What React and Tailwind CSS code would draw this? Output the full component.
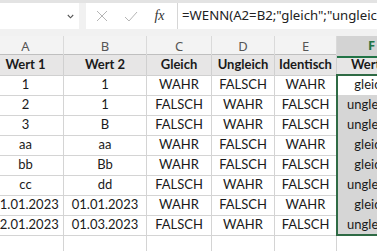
import React from "react";

const rows = [
  ["1", "1", "WAHR", "FALSCH", "WAHR", "gleich"],
  ["2", "1", "FALSCH", "WAHR", "FALSCH", "ungleich"],
  ["3", "B", "FALSCH", "WAHR", "FALSCH", "ungleich"],
  ["aa", "aa", "WAHR", "FALSCH", "WAHR", "gleich"],
  ["bb", "Bb", "WAHR", "FALSCH", "FALSCH", "gleich"],
  ["cc", "dd", "FALSCH", "WAHR", "FALSCH", "ungleich"],
  ["01.01.2023", "01.01.2023", "WAHR", "FALSCH", "WAHR", "gleich"],
  ["02.01.2023", "01.03.2023", "FALSCH", "WAHR", "FALSCH", "ungleich"],
];

const headers = ["Wert 1", "Wert 2", "Gleich", "Ungleich", "Identisch", "Wert 3"];
const letters = ["A", "B", "C", "D", "E"];

export default function App() {
  return (
    <div className="relative w-[377px] h-[251px] overflow-hidden bg-white">
      {/* formula bar */}
      <div className="h-[36px] bg-[#f1f1f1] border-t-[3px] border-[#e3e3e3] pb-[7px] flex">
        <div className="w-[79px] h-[26px] bg-white flex items-center justify-end pr-[5px]">
          <svg width="7" height="5" viewBox="0 0 7 5">
            <path d="M0.8 1 L3.5 3.8 L6.2 1" fill="none" stroke="#555" strokeWidth="1.1" />
          </svg>
        </div>
        <div className="w-[7px]" />
        <div className="w-[91px] h-[26px] bg-white flex items-center">
          <div className="w-[30px] flex justify-center ml-[1px]">
            <svg width="12" height="12" viewBox="0 0 12 12">
              <path d="M1 1 L11 11 M11 1 L1 11" stroke="#b5b5b5" strokeWidth="1" fill="none" />
            </svg>
          </div>
          <div className="w-[27px] flex justify-center">
            <svg width="14" height="11" viewBox="0 0 14 11">
              <path d="M1 6 L5 10 L13 1" stroke="#b5b5b5" strokeWidth="1" fill="none" />
            </svg>
          </div>
          <div
            className="flex-1 text-center italic text-[14px] text-[#333] leading-none pr-[2px]"
            style={{ fontFamily: '"Liberation Serif", serif' }}
          >
            fx
          </div>
        </div>
        <div
          className="flex-1 h-[26px] bg-white border-l border-[#d6d6d6] flex items-center pl-[4px] whitespace-nowrap overflow-hidden text-[13.2px] text-[#222]"
          style={{ fontFamily: '"Noto Sans", sans-serif' }}
        >
          =WENN(A2=B2;"gleich";"ungleich")
        </div>
      </div>

      {/* grid */}
      <div className="ml-[-12px]">
        <div
          className="grid grid-cols-[76px_83px_65px_63px_62px_69px] h-[19px] bg-[#f3f3f3] border-b border-[#bfbfbf] text-[13px] text-[#555]"
          style={{ fontFamily: '"Noto Sans", sans-serif' }}
        >
          {letters.map((l) => (
            <div key={l} className="flex items-center justify-center border-r border-[#dadada]">
              {l}
            </div>
          ))}
          <div className="flex items-center justify-center bg-[#d3d3d3] border-b-2 border-[#217346] font-bold text-[#217346] mb-[-1px]">
            F
          </div>
        </div>

        <div style={{ fontFamily: "Lato, sans-serif" }} className="text-[13px] text-[#1a1a1a]">
          <div className="grid grid-cols-[76px_83px_65px_63px_62px_69px] h-[20px] bg-[#e7e6e6] font-bold">
            {headers.map((h, i) => (
              <div
                key={i}
                className="flex items-center justify-center border-r border-b border-[#d0d0d0] whitespace-nowrap"
              >
                {h}
              </div>
            ))}
          </div>
          {rows.map((r, ri) => (
            <div key={ri} className="grid grid-cols-[76px_83px_65px_63px_62px_69px] h-[20px]">
              {r.map((c, ci) => (
                <div
                  key={ci}
                  className={
                    "flex items-center justify-center border-r border-b border-[#d4d4d4] whitespace-nowrap " +
                    (ci === 5 && ri > 0 ? "bg-[#d6d6d6]" : "")
                  }
                >
                  {c}
                </div>
              ))}
            </div>
          ))}
          <div className="grid grid-cols-[76px_83px_65px_63px_62px_69px] h-[20px]">
            {[0, 1, 2, 3, 4, 5].map((i) => (
              <div key={i} className="border-r border-[#d4d4d4]" />
            ))}
          </div>
        </div>
      </div>

      {/* selection outline */}
      <div className="absolute left-[336px] top-[74px] w-[72px] h-[162px] border-2 border-[#2f6b45] pointer-events-none" />
    </div>
  );
}
